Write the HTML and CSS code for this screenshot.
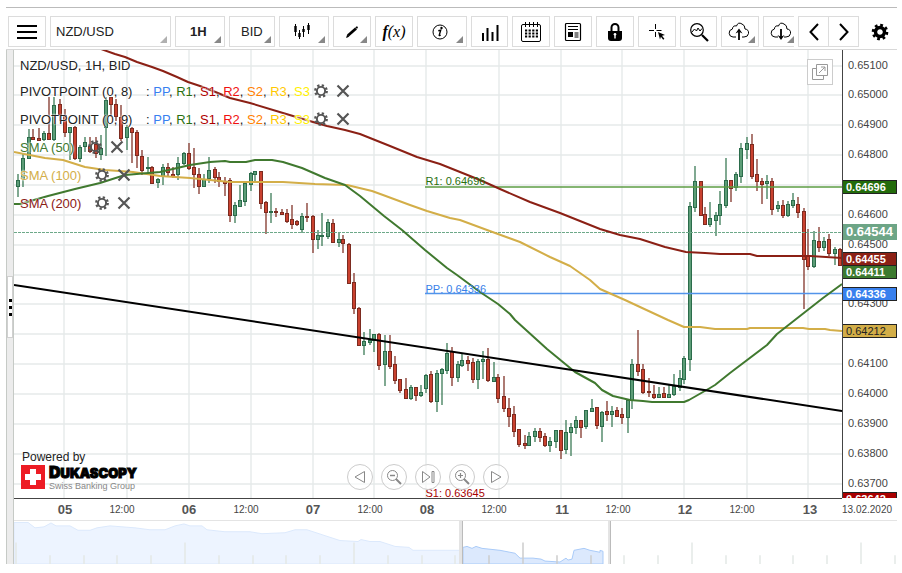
FILE: index.html
```html
<!DOCTYPE html>
<html lang="en">
<head>
<meta charset="utf-8">
<title>NZD/USD chart</title>
<link rel="stylesheet" href="styles.css">
</head>
<body>
<div class="app">
  <header class="toolbar">
    <button class="tool" aria-label="Menu"><svg width="20" height="16" viewBox="0 0 20 16"><path d="M0 2h20M0 8h20M0 14h20" stroke="#000" stroke-width="2"/></svg></button>
    <label class="pick pick-symbol"><select aria-label="Instrument"><option>NZD/USD</option></select></label>
    <label class="pick pick-period"><select aria-label="Period"><option>1H</option></select></label>
    <label class="pick pick-side"><select aria-label="Price side"><option>BID</option></select></label>
    <button class="tool wide more" aria-label="Chart type"><svg width="18" height="18" viewBox="0 0 18 18"><path d="M2.500 1v12M6.500 7v9M10.500 3v11M15.500 0v11" stroke="#000" stroke-width="1"/><path d="M2.500 3v6M6.500 10v4M10.500 6v3M15.500 2v5" stroke="#000" stroke-width="2.400"/></svg></button>
    <button class="tool more" aria-label="Draw"><svg width="16" height="16" viewBox="0 0 16 16"><path d="M4 11.500L12 4.500" stroke="#000" stroke-width="2.800"/><path d="M11.300 3.200l1.700-1 1 1-1 1.800z M2 14l1.200-3.500 2 2.300z"/></svg></button>
    <button class="tool fx" aria-label="Indicators"><b>f</b>(x)</button>
    <button class="tool wide more" aria-label="Information"><svg width="18" height="18" viewBox="0 0 18 18"><circle cx="9" cy="9" r="7" fill="none" stroke="#000" stroke-width="1"/><circle cx="10.500" cy="5" r="1.200"/><path d="M7.300 7.800l2.400-.5-1.500 5c-.1.500.5.300 1.300-.6" fill="none" stroke="#000" stroke-width="1.400"/></svg></button>
    <button class="tool narrow" aria-label="Volume"><svg width="18" height="18" viewBox="0 0 18 18"><path d="M2 10v8M6.500 5v13M11.500 9v9M16.500 2v16" stroke="#000" stroke-width="2"/></svg></button>
    <button class="tool" aria-label="Calendar"><svg width="22" height="22" viewBox="0 0 22 22"><rect x="1.500" y="3.500" width="19" height="17" rx="1.500" fill="none" stroke="#000" stroke-width="1"/><path d="M5.500 1v5M9.500 1v5M13.500 1v5M17.500 1v5" stroke="#000"/><path d="M5 9.500h13M5 12.500h13M5 15.500h13" stroke="#000" stroke-width="1.800" stroke-dasharray="2.200 1.400"/></svg></button>
    <button class="tool" aria-label="News"><svg width="18" height="20" viewBox="0 0 18 20"><rect x="1.500" y="1.500" width="15" height="17" rx="1" fill="none" stroke="#000" stroke-width="1.200"/><path d="M4 4.500h10M4 7.500h10M10.500 11h4M10.500 13h4M10.500 15h4" stroke="#000" stroke-width="1"/><path d="M4 10h5v5H4z"/></svg></button>
    <button class="tool" aria-label="Lock"><svg width="16" height="20" viewBox="0 0 16 20"><path d="M4.500 10V5.500a3.500 3.500 0 0 1 7 0V10" fill="none" stroke="#000" stroke-width="2"/><path d="M1 9h14v7q0 3-3 3H4q-3 0-3-3z"/><path d="M8 12v4.500" stroke="#fff" stroke-width="1.400"/><circle cx="8" cy="12.300" r="1.300" fill="#fff"/></svg></button>
    <button class="tool" aria-label="Crosshair"><svg width="18" height="18" viewBox="0 0 18 18"><path d="M1 7.500h5M8.500 7.500h5M7.500 1v5M7.500 9v5" stroke="#000" stroke-width="1"/><path d="M10 9l7 3-3 .7 2.400 3-1.200 1-2.300-3L12 16.500z"/></svg></button>
    <button class="tool narrow" aria-label="Zoom chart"><svg width="20" height="20" viewBox="0 0 20 20"><circle cx="8" cy="8" r="6.300" fill="none" stroke="#000" stroke-width="1.200"/><path d="M13 13l6 6" stroke="#000" stroke-width="2.200"/><path d="M3 10l2.500-3 2 2 1.500-3 2 3 2-2.500" fill="none" stroke="#000"/></svg></button>
    <button class="tool more" aria-label="Upload"><svg class="cloud" width="22" height="20" viewBox="0 0 22 20"><path d="M8 15H5a4 4 0 0 1-.7-7.900Q5 3 8.500 4 10-.5 14 2q3 1 3 5 4 .5 3.500 4.500Q20 15 16 15h-2" fill="none" stroke="#000" stroke-width="1"/><path d="M11 18v-8" stroke="#000" stroke-width="1.800"/><path d="M7.500 11.500L11 6.500l3.500 5-3.500-1.700z"/></svg></button>
    <button class="tool cut more" aria-label="Download"><svg class="cloud" width="22" height="20" viewBox="0 0 22 20"><path d="M8 15H5a4 4 0 0 1-.7-7.900Q5 3 8.500 4 10-.5 14 2q3 1 3 5 4 .5 3.500 4.500Q20 15 16 15h-2" fill="none" stroke="#000" stroke-width="1"/><path d="M11 7v8" stroke="#000" stroke-width="1.800"/><path d="M7.500 13l3.500 5 3.500-5-3.500 1.700z"/></svg></button>
    <div class="pager">
      <button aria-label="Previous"><svg width="12" height="18" viewBox="0 0 12 18"><path d="M10 1L2.500 9l7.500 8" fill="none" stroke="#000" stroke-width="2"/></svg></button>
      <button aria-label="Next"><svg width="12" height="18" viewBox="0 0 12 18"><path d="M2 1l7.500 8L2 17" fill="none" stroke="#000" stroke-width="2"/></svg></button>
    </div>
    <button class="settings" aria-label="Settings"><svg width="18" height="18" viewBox="-9 -9 18 18"><use href="#cog"/></svg></button>
  </header>

  <div class="workspace">
    <aside class="gutter"><span class="grip"><i></i><i></i><i></i></span></aside>
    <main class="board">
      <section class="plot" id="plot">
        <svg class="canvas" id="canvas" viewBox="14 50 828 448" preserveAspectRatio="none" aria-label="Price chart">
          <g id="grid"></g>
          <g id="candles"></g>
          <path class="level level-bid" d="M14 232.500H842"/>
          <path class="level level-r1" d="M425 187H842"/>
          <path class="level level-pp" d="M425 293.500H842"/>
          <polyline class="line sma100" points="14,152 45,158 63,160 85,167 105,170 133,172 160,176 190,178 230,182 283,182 315,184 347,185 372,191 383,195 410,205 427,211 450,218 460,220 487,230 520,242 550,257 570,266 590,280 600,289 625,300 640,307 668,320 684,327 700,327 715,329 747,329 750,328 803,328 809,329 825,329 830,330 842,331"/>
          <polyline class="line sma200" points="101,49 115,54 125,57 137,62 152,67 163,71 177,77 188,82 200,86 213,91 230,98 250,103 283,113 313,122 327,126 345,130 360,134 380,142 390,146 417,157 440,164 450,168 480,180 500,189 530,202 560,213 600,229 620,235 640,239 665,247 686,252 705,253 720,254 750,254 757,256 810,256 842,258"/>
          <polyline class="line sma50" points="14,204 20,204 48,196 75,189 100,183 125,175 160,172 190,165 210,162 225,161 230,162 246,162 255,160 272,160 283,162 302,168 325,178 345,185 360,196 384,216 402,230 425,250 447,268 457,275 480,292 498,304 510,314 515,320 547,349 575,372 595,383 602,390 613,396 630,400 643,401 652,402 684,402 689,400 710,388 715,385 730,373 767,345 777,334 823,298 842,284"/>
          <path class="line trend" d="M14 285L842 411"/>
        </svg>
        <span class="tag-line r1">R1: 0.64696</span>
        <span class="tag-line pp">PP: 0.64336</span>
        <span class="tag-line s1">S1: 0.63645</span>

        <div class="legend">
          <div class="title">NZD/USD, 1H, BID</div>
          <div class="row pivot"><span class="name">PIVOTPOINT (0, 8)</span><span class="set">: <b class="c-pp">PP</b>, <b class="c-r1">R1</b>, <b class="c-s1">S1</b>, <b class="c-r2">R2</b>, <b class="c-s2">S2</b>, <b class="c-r3">R3</b>, <b class="c-s3">S3</b></span><span class="acts"></span></div>
          <div class="row pivot"><span class="name">PIVOTPOINT (0, 9)</span><span class="set">: <b class="c-pp">PP</b>, <b class="c-r1">R1</b>, <b class="c-s1">S1</b>, <b class="c-r2">R2</b>, <b class="c-s2">S2</b>, <b class="c-r3">R3</b>, <b class="c-s3">S3</b></span><span class="acts"></span></div>
          <div class="row sma"><span class="t50">SMA (50)</span><span class="acts"></span></div>
          <div class="row sma"><span class="t100">SMA (100)</span><span class="acts"></span></div>
          <div class="row sma"><span class="t200">SMA (200)</span><span class="acts"></span></div>
        </div>

        <button class="detach" aria-label="Open in new window"><svg width="18" height="18" viewBox="0 0 18 18" fill="none" stroke="#999"><path d="M5.500 1.500h11v11h-11zM5 5.500H1.500v11h11V13"/><path d="M8 10l6-6M10 4h4v4"/></svg></button>

        <div class="brand">
          <div class="powered">Powered by</div>
          <div class="logo">
            <svg width="24" height="24" viewBox="0 0 24 24"><path fill="#ed1c24" d="M0 0h24v24H0z"/><path fill="#fff" d="M9 4h6v5h5v6h-5v5H9v-5H4V9h5z"/></svg>
            <div><div class="word"><span>D</span>UKASCOPY</div><div class="sub">Swiss Banking Group</div></div>
          </div>
        </div>

        <nav class="controls">
          <button aria-label="Back"><svg width="14" height="14" viewBox="0 0 14 14"><path d="M11.500 1.500v11L2 7z"/></svg></button>
          <button aria-label="Zoom out"><svg width="16" height="16" viewBox="0 0 16 16"><circle cx="6.500" cy="6.500" r="5"/><path d="M4 6.500h5" stroke-width="1.500"/><path d="M10 10l5 5" stroke-width="2"/></svg></button>
          <button aria-label="Latest"><svg width="14" height="14" viewBox="0 0 14 14"><path d="M1.500 1.500v11L9 7zM11 1.500h2v11h-2z"/></svg></button>
          <button aria-label="Zoom in"><svg width="16" height="16" viewBox="0 0 16 16"><circle cx="6.500" cy="6.500" r="5"/><path d="M4 6.500h5M6.500 4v5" stroke-width="1.200"/><path d="M10 10l5 5" stroke-width="2"/></svg></button>
          <button aria-label="Forward"><svg width="14" height="14" viewBox="0 0 14 14"><path d="M2.500 1.500v11L12 7z"/></svg></button>
        </nav>
      </section>

      <aside class="prices" id="prices"></aside>
      <div class="times" id="times"></div>
      <div class="date">13.02.2020</div>

      <section class="overview">
        <svg viewBox="14 520 883 44" preserveAspectRatio="none" aria-label="Overview">
          <path class="past" d="M14 564V521.500H28L35 527 44 526 51 522 56 525 70 525 78 529.500 90 529.500 97 527 110 525 135 527 150 529 165 529 175 525 184 523 190 525 202 525 207 529 225 531 250 531 262 533 285 532 295 529 307 529 322 534 340 540 358 541 361 539 370 541 380 541 395 546 409 547 413 550 460 550V564z"/>
          <path class="window" d="M463 564V547L467 546 472 548 476 546 482 548 500 550 515 553 520 558 533 558 541 559 545 561 560 562 566 558 568 560 572 559 574 550 579 549 584 548 590 550 600 552 600 550 603 551V564z"/>
          <g id="ticks"></g>
          <path fill="#e4e4e4" d="M459 520h4v44h-4zM608 520h2v44h-2z"/><path fill="#bbb" d="M462 520h1v44h-1zM610 520h1v44h-1z"/>
        </svg>
      </section>
    </main>
  </div>
</div>

<svg width="0" height="0" class="defs"><defs>
  <g id="cog"><circle r="4.500" fill="none" stroke="currentColor" stroke-width="3.400"/><circle r="6.800" fill="none" stroke="currentColor" stroke-width="3" stroke-dasharray="2.670 2.670"/></g>
  <g id="cog-light"><circle r="5" fill="none" stroke="currentColor" stroke-width="2.400"/><circle r="7" fill="none" stroke="currentColor" stroke-width="2.800" stroke-dasharray="2.750 2.750"/></g>
</defs></svg>
<script src="chart.js"></script>
</body>
</html>
```
FILE: styles.css
```css
* { box-sizing: border-box; }
body { margin: 0; background: #fff; font-family: "Liberation Sans", Arial, sans-serif; font-size: 13px; color: #222; }
button { padding: 0; background: #fff; border: 1px solid #dcdcdc; color: #000; display: flex; align-items: center; justify-content: center; }
.defs { position: absolute; }
.app { display: flex; flex-direction: column; height: calc(100vh - 16px); margin: 7px 5px 9px 6px; border-top: 1px solid #bbb; }
.toolbar { display: flex; flex: none; gap: 4px; padding: 8px 0 2px 2px; border-bottom: 1px solid #d8d8d8; }
.tool { position: relative; flex: none; width: 38px; height: 31px; }
.tool.narrow { width: 37px; }
.tool.wide { width: 50px; }
.tool.cut { width: 31px; border-right: 0; }
.tool.wide svg { margin-right: 4px; }
.more::after, .pick::after { content: ""; position: absolute; right: 3px; bottom: 3px; border-left: 7px solid transparent; border-bottom: 7px solid #888; }
.cut.more::after { right: 0; }
.cloud { margin-left: -2px; }
.cut .cloud { margin-left: 4px; }
.fx { font: italic 16px "Liberation Serif", serif; }
.pick { position: relative; flex: none; height: 31px; border: 1px solid #dcdcdc; }
.pick select { width: 100%; height: 100%; appearance: none; border: 0; padding: 0 0 0 5px; background: none; color: #222; font: 13px "Liberation Sans", Arial, sans-serif; }
.pick-symbol { width: 121px; }
.pick-symbol::after { border-bottom-color: #b0b0b0; }
.pick-period { width: 50px; }
.pick-side { width: 46px; }
.pick .pick-label { font-weight: 400; }
.pick-period select { padding-left: 14px; font-weight: 700; }
.pick-side select { padding-left: 11px; }
.pager { display: flex; flex: none; }
.pager button { width: 31px; height: 31px; }
.pager button + button { margin-left: -1px; }
.settings { width: 34px; height: 31px; border: 0; }

.workspace { display: flex; flex: 1; min-height: 0; }
.gutter { display: flex; align-items: center; width: 8px; background: #ececec; border: solid #c6cac6; border-width: 0 1px; }
.grip { display: flex; flex-direction: column; justify-content: center; align-items: center; gap: 4px; width: 6px; height: 62px; background: #fff; border: 1px solid #d0d0d0; }
.grip i { width: 3px; height: 3px; background: #000; }
.board { display: grid; flex: 1; min-width: 0; grid-template: minmax(0, 1fr) 22px 44px / minmax(0, 1fr) 55px; }
.plot { position: relative; overflow: hidden; }
.canvas { display: block; width: 100%; height: 100%; }
.grid-line { stroke: #e6eaea; stroke-width: 1.4; }
.candle path { stroke-width: 1.4; }
.up path { stroke: #4a8563; } .up rect { fill: #5c9d77; stroke: #2b6c4b; }
.down path { stroke: #8a4238; } .down rect { fill: #c9412f; stroke: #7c2b20; }
.line { fill: none; stroke-width: 2; stroke-linejoin: round; }
.sma50 { stroke: #40792f; } .sma100 { stroke: #d3ae48; } .sma200 { stroke: #8b2015; } .trend { stroke: #000; }
.level { fill: none; stroke-width: 1.3; }
.level-bid { stroke: #6da989; stroke-width: 1; stroke-dasharray: 3 1; }
.level-r1 { stroke: #5d9d43; } .level-pp { stroke: #5294ea; }
.tag-line { position: absolute; left: 49.7%; font-size: 11px; line-height: 12px; }
.tag-line.r1 { top: 28%; color: #2a7010; } .tag-line.pp { top: 52%; color: #3880e8; } .tag-line.s1 { top: 97.6%; color: #a80000; }

.legend { position: absolute; top: 5px; left: 6px; text-shadow: 0 0 2px #fff, 0 0 2px #fff, 0 0 1px #fff; }
.title { height: 22px; line-height: 22px; }
.row { display: flex; align-items: center; height: 28px; white-space: pre; }
.name { width: 126px; }
.row b { font-weight: 400; }
.acts { display: flex; gap: 8px; margin-left: 4px; color: #555; }
.acts svg { display: block; }
.sma .acts { margin-left: 14px; }
.t50 { color: #40792f; } .t100 { color: #d3ae48; } .t200 { color: #8b2015; }
.c-pp { color: #3880f0; } .c-r1 { color: #2a7010; } .c-s1 { color: #b00000; } .c-r2 { color: #f01010; }
.c-s2 { color: #ff8000; } .c-r3 { color: #ffc800; } .c-s3 { color: #fff000; }
.detach { position: absolute; top: 9px; right: 9px; width: 26px; height: 26px; border-color: #ccc; }
.brand { position: absolute; left: 7px; bottom: 8px; }
.powered { margin-left: 1px; font-size: 12px; line-height: 15px; }
.logo { display: flex; gap: 4px; height: 25px; }
.word { font: 900 13px/15px Inter, sans-serif; color: #000; -webkit-text-stroke: 1px #000; }
.word span { font-size: 16px; }
.sub { font-size: 9px; line-height: 11px; color: #888; }
.controls { position: absolute; left: 0; right: 0; bottom: 8px; display: flex; justify-content: center; gap: 8px; pointer-events: none; }
.controls button { width: 26px; height: 26px; border-color: #ccc; border-radius: 50%; background: rgba(255, 255, 255, .6); pointer-events: auto; }
.controls svg { fill: none; stroke: #888; }

.prices { position: relative; overflow: hidden; border-left: 1px solid #444; color: #444; font-size: 11px; line-height: 14px; }
.prices .price { position: absolute; left: 5px; transform: translateY(-50%); }
.badge { position: absolute; left: -1px; right: 0; height: 14px; padding-left: 3px; border: 1px solid #222; color: #fff; font-weight: 700; line-height: 12px; transform: translateY(-50%); }
.badge.bid { height: 16px; border: 0; padding-left: 4px; background: #6da586; font-size: 13px; line-height: 16px; }
.badge.r1 { background: #236b0b; } .badge.b200 { background: #8b2015; } .badge.b50 { background: #3d7a2f; }
.badge.pp { background: #3880ee; } .badge.b100 { background: #d3ae48; color: #222; font-weight: 400; } .badge.s1 { background: #a80000; }
.times { position: relative; border-top: 1px solid #444; color: #444; font-size: 10px; line-height: 22px; }
.times span { position: absolute; transform: translateX(-50%); }
.times .day { font-size: 13px; font-weight: 700; color: #555; }
.date { color: #444; font-size: 10px; line-height: 24px; white-space: nowrap; }
.overview { grid-column: 1 / -1; border-top: 1px solid #e4e4e4; }
.overview svg { display: block; width: 100%; height: 100%; }
.past { fill: #edf4ff; stroke: #dce9fc; }
.window { fill: #dce9fd; stroke: #a9caf8; }
.tick { stroke: #e3e8e6; stroke-width: 1.5; }
.tick.on { stroke: #ccc; }
```
FILE: chart.js
```js
// Each candle: x, high, low, body top, body bottom, direction (u/d)
const candles = `18,174,197,180,187,u 23,153,187,158,179,u 29,129,159,137,159,u 33,129,140,137,140,d 39,128,141,138,141,d 44,131,141,133,140,u 49,97,140,133,140,d 54,97,141,105,140,u 60,99,121,104,115,d 65,109,137,115,133,d
70,127,160,127,133,u 75,126,160,127,159,d 80,145,162,147,159,u 85,137,152,142,147,u 90,137,153,146,152,d 96,137,158,144,154,d 101,135,160,148,155,u 106,97,156,100,128,u 111,97,117,97,105,d 116,99,121,104,117,d 121,105,141,117,139,d 127,125,150,127,138,u
132,127,163,128,133,d 137,130,168,132,156,d 142,150,175,156,171,d 148,157,173,167,169,u 152,166,184,167,184,d 158,178,188,179,183,u 163,164,185,167,177,u 168,163,176,167,173,d 173,167,178,174,177,d 178,157,180,163,175,u 184,152,165,153,164,u 189,143,170,153,169,d 194,148,188,167,175,d 199,168,194,174,187,d
204,174,187,179,187,u 209,157,183,170,179,u 215,167,183,169,178,d 219,172,187,177,182,d 225,177,196,181,184,d 230,178,222,180,216,d 235,202,223,205,216,u 240,185,207,200,207,u 245,182,206,183,202,u 251,172,191,173,185,u 255,171,182,171,175,u 261,171,209,171,204,d 266,201,234,202,213,d 271,193,223,211,213,u
276,208,217,211,213,d 282,209,215,212,215,d 287,209,223,213,222,d 292,205,229,219,225,d 297,220,226,221,225,d 302,213,233,216,230,u 307,203,222,216,218,d 313,215,253,216,240,d 318,230,249,235,240,u 322,213,246,235,237,u 328,219,239,222,237,u 333,219,243,223,243,d 339,232,247,239,243,u 343,235,253,239,244,d
349,243,284,244,284,d 354,273,314,282,309,d 359,307,346,308,346,d 364,332,355,341,346,u 370,329,345,340,343,u 374,334,352,334,341,u 379,333,370,334,366,d 385,335,386,351,365,u 390,335,369,351,367,d 395,356,384,364,381,d 400,379,393,379,391,d 406,378,399,389,399,d 411,385,400,387,399,u 416,387,401,387,396,d
421,385,397,392,396,u 426,374,393,375,389,u 431,371,403,374,402,d 437,370,412,373,402,u 442,368,405,369,374,u 447,343,374,353,371,u 452,347,386,351,378,d 458,361,382,364,378,u 462,353,367,360,366,u 468,356,371,360,364,d 473,358,383,362,380,d 478,359,389,361,380,u 483,351,379,359,362,u 488,348,382,359,381,d
494,362,382,377,382,u 498,374,403,377,399,d 504,376,412,396,409,d 509,398,427,408,417,d 514,406,437,414,432,d 519,429,447,429,445,d 525,435,449,443,446,d 529,432,446,436,446,u 535,428,442,431,437,u 540,428,442,431,438,d 545,433,447,436,446,d 550,437,452,441,446,u 556,430,448,430,442,u 561,430,459,430,451,d
566,420,454,432,450,u 571,423,456,427,433,u 576,416,434,420,428,u 581,420,438,420,428,d 586,410,429,410,427,u 592,399,412,408,412,u 597,407,429,407,426,d 602,411,442,412,427,u 607,401,421,411,415,d 612,406,427,411,415,u 617,407,417,410,417,d 622,408,424,414,418,d 628,399,433,400,418,u 632,359,409,364,401,u
638,330,376,364,372,d 643,364,394,369,393,d 649,378,397,391,393,d 654,385,399,394,398,d 659,387,398,394,398,u 664,387,398,393,398,d 669,384,398,394,398,u 674,374,396,386,395,u 680,370,391,378,388,u 684,356,384,358,380,u 690,202,371,206,360,u 695,166,212,181,208,u 701,181,216,181,216,d 705,207,225,214,225,d
710,202,227,218,225,u 716,212,236,215,221,u 720,191,225,204,216,u 726,158,208,180,206,u 731,180,202,180,189,d 736,172,191,174,188,u 741,143,183,148,177,u 747,137,159,143,150,u 752,134,179,144,177,d 757,159,191,174,182,d 762,178,204,181,185,d 767,175,199,181,184,u 772,178,215,181,210,d 778,201,212,205,209,u
783,200,218,205,216,d 788,201,217,204,216,u 793,193,208,200,206,u 798,197,218,204,213,d 804,208,309,211,260,d 808,229,270,256,267,d 814,231,268,240,267,u 819,227,252,241,248,d 824,237,251,241,248,u 829,234,256,239,254,d 835,247,265,249,254,u 840,248,266,249,266,d`;

const el = id => document.getElementById(id);
const TOP = 50, HEIGHT = 448, LEFT = 14, WIDTH = 828;
const yOf = price => 65.5 + (0.651 - price) / 0.001 * 29.86;
const topPct = y => (y - TOP) / HEIGHT * 100 + '%';

let grid = '';
for (let i = 0; i <= 14; i++) {
  const y = Math.round(yOf(0.651 - i * 0.001));
  grid += `<path class="grid-line" d="M14 ${y}H842"/>`;
}
[64, 127, 189, 251, 313, 374, 426, 499, 561, 622, 684, 747, 808].forEach(x => {
  grid += `<path class="grid-line" d="M${x} 50V498"/>`;
});
el('grid').innerHTML = grid;

el('candles').innerHTML = candles.split(/\s+/).map(row => {
  const [x, h, l, t, b, d] = row.split(',');
  const bodyHeight = Math.max(1, b - t - 1);
  return `<g class="candle ${d === 'u' ? 'up' : 'down'}"><path d="M${x} ${h}V${l}"/><rect x="${x - 1.5}" y="${+t + 0.5}" width="3" height="${bodyHeight}"/></g>`;
}).join('');

let prices = '';
for (let i = 0; i <= 14; i++) {
  if ([4, 7, 9].includes(i)) continue;
  const p = 0.651 - i * 0.001;
  prices += `<span class="price" style="top:${topPct(yOf(p) - 1)}">${p.toFixed(5)}</span>`;
}
[['r1', '0.64696', 187], ['b50', '0.64411', 272], ['b200', '0.64455', 259], ['bid', '0.64544', 232],
 ['pp', '0.64336', 294], ['b100', '0.64212', 331], ['s1', '0.63642', 499]].forEach(([c, text, y]) => {
  prices += `<span class="badge ${c}" style="top:${topPct(y)}">${text}</span>`;
});
el('prices').innerHTML = prices;

el('times').innerHTML = [['05', 65], ['12:00', 122], ['06', 189], ['12:00', 246], ['07', 313], ['12:00', 370], ['08', 427],
  ['12:00', 494], ['11', 562], ['12:00', 618], ['12', 685], ['12:00', 742], ['13', 810]].map(([t, x]) =>
  `<span class="${t.length === 2 ? 'day' : 'hour'}" style="left:${(x - LEFT) / WIDTH * 100}%">${t}</span>`).join('');

let ticks = '';
for (let i = 0; i <= 26; i++) {
  const x = Math.round(16 + i * 33.8);
  ticks += `<path class="tick${x > 463 && x < 608 ? ' on' : ''}" d="M${x} ${i % 5 ? 555 : 542}V564"/>`;
}
el('ticks').innerHTML = ticks;

document.querySelectorAll('.acts').forEach(n => {
  n.innerHTML = '<svg width="14" height="14" viewBox="-8.500 -8.500 17 17"><use href="#cog-light"/></svg>' +
    '<svg width="14" height="14" viewBox="0 0 14 14"><path d="M1.500 1.500l11 11M12.500 1.500L1.500 12.500" stroke="currentColor" stroke-width="2.200"/></svg>';
});
```
